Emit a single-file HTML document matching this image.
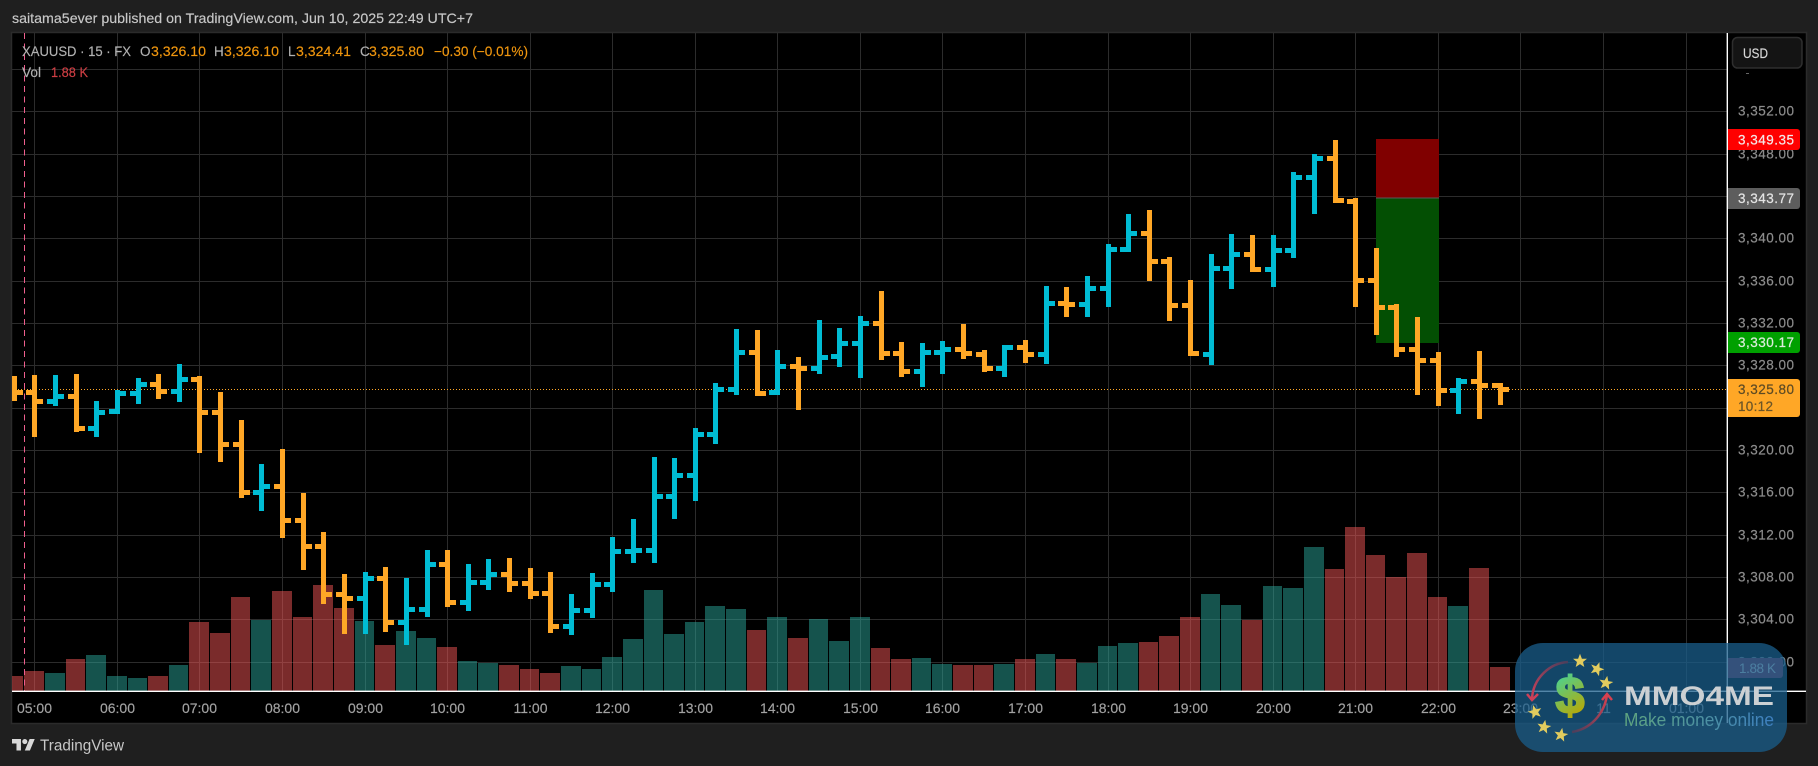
<!DOCTYPE html>
<html lang="en">
<head>
<meta charset="utf-8">
<title>XAUUSD chart</title>
<style>
html,body{margin:0;padding:0;background:#1f1f1f;width:1818px;height:766px;overflow:hidden}
svg{display:block}
text{font-family:"Liberation Sans",sans-serif}
.p{font-size:13.5px;fill:#8c8c8c;stroke:#8c8c8c;stroke-width:.2}
.t{font-size:14px;fill:#a3a3a3;stroke:#a3a3a3;stroke-width:.15;text-anchor:middle}
.g{stroke:#2c2c2c;stroke-width:1;fill:none}
.l{font-size:13.5px;stroke-width:.15}
.w{fill:#b2b2b2;stroke:#b2b2b2}
.o{fill:#f0960e;stroke:#f0960e}
</style>
</head>
<body>
<svg width="1818" height="766" viewBox="0 0 1818 766" xmlns="http://www.w3.org/2000/svg">
<defs>
<linearGradient id="dg" gradientUnits="userSpaceOnUse" x1="1558" y1="678" x2="1584" y2="714"><stop offset="0" stop-color="#4fd08c"/><stop offset="1" stop-color="#bda600"/></linearGradient>
<linearGradient id="mg" gradientUnits="userSpaceOnUse" x1="1624" y1="0" x2="1774" y2="0"><stop offset="0" stop-color="#5fa57f"/><stop offset="1" stop-color="#3d7fc0"/></linearGradient>
<linearGradient id="a1" gradientUnits="userSpaceOnUse" x1="1568" y1="662" x2="1532" y2="700"><stop offset="0" stop-color="#4a3f5c"/><stop offset="1" stop-color="#cf4058"/></linearGradient>
<linearGradient id="a2" gradientUnits="userSpaceOnUse" x1="1572" y1="732" x2="1607" y2="695"><stop offset="0" stop-color="#4a3f5c"/><stop offset="1" stop-color="#d8404f"/></linearGradient>
<polygon id="st" points="0,-7.2 1.9,-2.3 7,-2.2 3,1 4.3,6 0,3.1 -4.3,6 -3,1 -7,-2.2 -1.9,-2.3" fill="#e2cc5e"/>
</defs>

<rect x="0" y="0" width="1818" height="766" fill="#1f1f1f"/>
<text x="12" y="23" font-size="14" fill="#c8c8c8" stroke="#c8c8c8" stroke-width=".15" textLength="461" lengthAdjust="spacingAndGlyphs">saitama5ever published on TradingView.com, Jun 10, 2025 22:49 UTC+7</text>

<!-- chart frame -->
<rect x="11.5" y="32.5" width="1795" height="691" fill="#000" stroke="#2b2b2b" stroke-width="1.5"/>

<!-- grid -->
<path class="g" shape-rendering="crispEdges" d="M12 69.5H1727M12 111.5H1727M12 154.5H1727M12 196.5H1727M12 238.5H1727M12 281.5H1727M12 323.5H1727M12 365.5H1727M12 408.5H1727M12 450.5H1727M12 492.5H1727M12 535.5H1727M12 577.5H1727M12 619.5H1727M12 662.5H1727"/>
<path class="g" shape-rendering="crispEdges" d="M34.5 33V691M117.5 33V691M199.5 33V691M282.5 33V691M365.5 33V691M447.5 33V691M530.5 33V691M612.5 33V691M695.5 33V691M777.5 33V691M860.5 33V691M942.5 33V691M1025.5 33V691M1108.5 33V691M1190.5 33V691M1273.5 33V691M1355.5 33V691M1438.5 33V691M1520.5 33V691M1603.5 33V691M1686.5 33V691"/>

<!-- current price dotted line -->
<path d="M12 389.5H1727" stroke="#ffa726" stroke-width="1" stroke-dasharray="1 2" shape-rendering="crispEdges"/>

<!-- volume -->
<path fill="#f45656" fill-opacity=".5" shape-rendering="crispEdges" d="M12 676H23V691H12zM24 671H44V691H24zM66 659H85V691H66zM148 676H168V691H148zM189 622H209V691H189zM210 633H230V691H210zM231 597H250V691H231zM272 591H292V691H272zM293 617H312V691H293zM313 585H333V691H313zM334 608H354V691H334zM375 645H395V691H375zM437 647H457V691H437zM499 665H519V691H499zM520 669H539V691H520zM540 673H560V691H540zM747 630H766V691H747zM788 638H808V691H788zM871 648H890V691H871zM891 659H911V691H891zM953 665H973V691H953zM974 665H993V691H974zM1015 659H1035V691H1015zM1056 659H1076V691H1056zM1139 642H1158V691H1139zM1159 636H1179V691H1159zM1180 617H1200V691H1180zM1242 620H1262V691H1242zM1325 569H1344V691H1325zM1345 527H1365V691H1345zM1366 555H1385V691H1366zM1386 577H1406V691H1386zM1407 553H1427V691H1407zM1428 597H1447V691H1428zM1469 568H1489V691H1469zM1490 667H1510V691H1490z"/>
<path fill="#2aa69a" fill-opacity=".5" shape-rendering="crispEdges" d="M45 673H65V691H45zM86 655H106V691H86zM107 676H127V691H107zM128 678H147V691H128zM169 665H188V691H169zM251 620H271V691H251zM355 621H374V691H355zM396 631H416V691H396zM417 638H436V691H417zM458 661H477V691H458zM478 663H498V691H478zM561 666H581V691H561zM582 669H601V691H582zM602 657H622V691H602zM623 639H643V691H623zM644 590H663V691H644zM664 634H684V691H664zM685 622H704V691H685zM705 606H725V691H705zM726 609H746V691H726zM767 617H787V691H767zM809 619H828V691H809zM829 641H849V691H829zM850 617H870V691H850zM912 658H931V691H912zM932 664H952V691H932zM994 664H1014V691H994zM1036 654H1055V691H1036zM1077 663H1097V691H1077zM1098 646H1117V691H1098zM1118 643H1138V691H1118zM1201 594H1220V691H1201zM1221 605H1241V691H1221zM1263 586H1282V691H1263zM1283 588H1303V691H1283zM1304 547H1324V691H1304zM1448 606H1468V691H1448z"/>

<!-- session dashed line -->
<path d="M24.5 33V691" stroke="#ef5f8e" stroke-width="1" stroke-dasharray="6 4.6" shape-rendering="crispEdges"/>

<!-- position box -->
<rect x="1376" y="139" width="63" height="59" fill="#800000"/>
<rect x="1376" y="198" width="63" height="145" fill="#034f03"/>
<rect x="1376" y="197.5" width="63" height="1" fill="#5a5a5a"/>

<!-- OHLC bars -->
<path fill="none" stroke="#ffa726" stroke-width="5" shape-rendering="crispEdges" d="M14.5 376V401M14.5 392.5H23
M34.5 375V437M26 392.5H34.5M34.5 401.5H43
M76.5 374V432M68 396.5H76.5M76.5 428.5H85
M158.5 374V399M150 384.5H158.5M158.5 391.5H167
M199.5 376V453M191 379.5H199.5M199.5 412.5H208
M220.5 392V462M212 412.5H220.5M220.5 444.5H229
M241.5 420V498M233 444.5H241.5M241.5 492.5H250
M282.5 449V538M274 486.5H282.5M282.5 520.5H291
M303.5 493V570M295 520.5H303.5M303.5 546.5H312
M323.5 532V604M315 546.5H323.5M323.5 594.5H332
M344.5 574V634M336 594.5H344.5M344.5 598.5H353
M385.5 567V632M377 578.5H385.5M385.5 622.5H394
M447.5 550V607M439 564.5H447.5M447.5 602.5H456
M509.5 558V592M501 574.5H509.5M509.5 583.5H518
M530.5 568V599M522 583.5H530.5M530.5 593.5H539
M550.5 572V633M542 593.5H550.5M550.5 626.5H559
M757.5 330V396M749 352.5H757.5M757.5 393.5H766
M798.5 357V410M790 366.5H798.5M798.5 368.5H807
M881.5 291V360M873 323.5H881.5M881.5 353.5H890
M901.5 342V377M893 353.5H901.5M901.5 371.5H910
M963.5 324V359M955 349.5H963.5M963.5 353.5H972
M984.5 350V372M976 354.5H984.5M984.5 368.5H993
M1025.5 340V363M1017 347.5H1025.5M1025.5 354.5H1034
M1066.5 287V317M1058 303.5H1066.5M1066.5 304.5H1075
M1149.5 210V281M1141 233.5H1149.5M1149.5 261.5H1158
M1169.5 257V321M1161 261.5H1169.5M1169.5 305.5H1178
M1190.5 280V356M1182 305.5H1190.5M1190.5 353.5H1199
M1252.5 235V272M1244 254.5H1252.5M1252.5 269.5H1261
M1335.5 140V203M1327 158.5H1335.5M1335.5 200.5H1344
M1355.5 198V307M1347 201.5H1355.5M1355.5 280.5H1364
M1376.5 248V335M1368 280.5H1376.5M1376.5 307.5H1385
M1396.5 304V357M1388 307.5H1396.5M1396.5 349.5H1405
M1417.5 317V395M1409 349.5H1417.5M1417.5 360.5H1426
M1438.5 352V406M1430 360.5H1438.5M1438.5 390.5H1447
M1479.5 351V419M1471 381.5H1479.5M1479.5 385.5H1488
M1500.5 383V405M1492 385.5H1500.5M1500.5 389.5H1509"/>
<path fill="none" stroke="#00bcd4" stroke-width="5" shape-rendering="crispEdges" d="M55.5 375V406M47 401.5H55.5M55.5 396.5H64
M96.5 401V437M88 428.5H96.5M96.5 412.5H105
M117.5 390V414M109 411.5H117.5M117.5 393.5H126
M138.5 378V404M130 393.5H138.5M138.5 384.5H147
M179.5 364V402M171 391.5H179.5M179.5 379.5H188
M261.5 464V511M253 492.5H261.5M261.5 486.5H270
M365.5 572V634M357 598.5H365.5M365.5 578.5H374
M406.5 578V645M398 622.5H406.5M406.5 609.5H415
M427.5 550V617M419 609.5H427.5M427.5 564.5H436
M468.5 564V611M460 602.5H468.5M468.5 582.5H477
M488.5 559V590M480 582.5H488.5M488.5 574.5H497
M571.5 594V635M563 626.5H571.5M571.5 610.5H580
M592.5 573V618M584 610.5H592.5M592.5 584.5H601
M612.5 537V592M604 584.5H612.5M612.5 551.5H621
M633.5 519V563M625 551.5H633.5M633.5 550.5H642
M654.5 457V563M646 550.5H654.5M654.5 496.5H663
M674.5 458V519M666 496.5H674.5M674.5 475.5H683
M695.5 428V501M687 475.5H695.5M695.5 434.5H704
M715.5 383V444M707 434.5H715.5M715.5 389.5H724
M736.5 329V395M728 389.5H736.5M736.5 352.5H745
M777.5 350V395M769 392.5H777.5M777.5 366.5H786
M819.5 320V374M811 368.5H819.5M819.5 357.5H828
M839.5 328V367M831 356.5H839.5M839.5 343.5H848
M860.5 316V378M852 343.5H860.5M860.5 323.5H869
M922.5 343V387M914 371.5H922.5M922.5 352.5H931
M942.5 341V374M934 352.5H942.5M942.5 349.5H951
M1004.5 345V377M996 368.5H1004.5M1004.5 347.5H1013
M1046.5 286V364M1038 354.5H1046.5M1046.5 303.5H1055
M1087.5 276V317M1079 304.5H1087.5M1087.5 288.5H1096
M1108.5 244V307M1100 288.5H1108.5M1108.5 249.5H1117
M1128.5 214V252M1120 249.5H1128.5M1128.5 233.5H1137
M1211.5 254V365M1203 354.5H1211.5M1211.5 268.5H1220
M1231.5 234V289M1223 268.5H1231.5M1231.5 254.5H1240
M1273.5 235V287M1265 269.5H1273.5M1273.5 250.5H1282
M1293.5 172V258M1285 250.5H1293.5M1293.5 177.5H1302
M1314.5 154V214M1306 177.5H1314.5M1314.5 158.5H1323
M1458.5 378V414M1450 390.5H1458.5M1458.5 381.5H1467"/>

<!-- legend -->
<text class="l w" x="22" y="56" textLength="109" lengthAdjust="spacingAndGlyphs">XAUUSD · 15 · FX</text>
<text class="l w" x="140" y="56">O</text>
<text class="l o" x="151" y="56" textLength="55" lengthAdjust="spacingAndGlyphs">3,326.10</text>
<text class="l w" x="214" y="56">H</text>
<text class="l o" x="224" y="56" textLength="55" lengthAdjust="spacingAndGlyphs">3,326.10</text>
<text class="l w" x="288" y="56">L</text>
<text class="l o" x="296" y="56" textLength="55" lengthAdjust="spacingAndGlyphs">3,324.41</text>
<text class="l w" x="360" y="56">C</text>
<text class="l o" x="369" y="56" textLength="55" lengthAdjust="spacingAndGlyphs">3,325.80</text>
<text class="l o" x="434" y="56" textLength="94" lengthAdjust="spacingAndGlyphs">−0.30 (−0.01%)</text>
<text class="l w" x="22" y="77" textLength="19" lengthAdjust="spacingAndGlyphs">Vol</text>
<text x="51" y="77" font-size="13.5" fill="#d03f44" stroke="#d03f44" stroke-width=".15" textLength="37" lengthAdjust="spacingAndGlyphs">1.88 K</text>

<!-- axes lines -->
<rect x="12" y="690.6" width="1794" height="1.4" fill="#fff"/>
<rect x="1726.6" y="33" width="1.4" height="690" fill="#fff"/>

<!-- price axis -->
<rect x="1732.5" y="37.5" width="69.5" height="30.5" rx="5" fill="#141414" stroke="#2e2e2e" stroke-width="1.5"/>
<text x="1743" y="58" font-size="13.5" fill="#d8d8d8" stroke="#d8d8d8" stroke-width=".15" textLength="25" lengthAdjust="spacingAndGlyphs">USD</text>
<rect x="1746" y="73" width="3" height="1" fill="#666"/>
<g class="pl">
<text class="p" x="1738" y="115.5" textLength="56" lengthAdjust="spacing">3,352.00</text>
<text class="p" x="1738" y="158.5" textLength="56" lengthAdjust="spacing">3,348.00</text>
<text class="p" x="1738" y="242.5" textLength="56" lengthAdjust="spacing">3,340.00</text>
<text class="p" x="1738" y="285.5" textLength="56" lengthAdjust="spacing">3,336.00</text>
<text class="p" x="1738" y="327.5" textLength="56" lengthAdjust="spacing">3,332.00</text>
<text class="p" x="1738" y="369.5" textLength="56" lengthAdjust="spacing">3,328.00</text>
<text class="p" x="1738" y="454.5" textLength="56" lengthAdjust="spacing">3,320.00</text>
<text class="p" x="1738" y="496.5" textLength="56" lengthAdjust="spacing">3,316.00</text>
<text class="p" x="1738" y="539.5" textLength="56" lengthAdjust="spacing">3,312.00</text>
<text class="p" x="1738" y="581.5" textLength="56" lengthAdjust="spacing">3,308.00</text>
<text class="p" x="1738" y="623.5" textLength="56" lengthAdjust="spacing">3,304.00</text>
<text class="p" x="1738" y="666.5" textLength="56" lengthAdjust="spacing">3,300.00</text>
</g>

<path d="M1728 129H1797a3 3 0 0 1 3 3V147a3 3 0 0 1-3 3H1728z" fill="#ff0000"/>
<text x="1738" y="144.5" font-size="13.5" fill="#f4e8e8" stroke="#f4e8e8" stroke-width=".2" textLength="56" lengthAdjust="spacing">3,349.35</text>
<path d="M1728 188H1797a3 3 0 0 1 3 3V206a3 3 0 0 1-3 3H1728z" fill="#5d5d5d"/>
<text x="1738" y="203" font-size="13.5" fill="#e4e4e4" stroke="#e4e4e4" stroke-width=".2" textLength="56" lengthAdjust="spacing">3,343.77</text>
<path d="M1728 332H1797a3 3 0 0 1 3 3V350a3 3 0 0 1-3 3H1728z" fill="#00a000"/>
<text x="1738" y="347" font-size="13.5" fill="#dcecdc" stroke="#dcecdc" stroke-width=".2" textLength="56" lengthAdjust="spacing">3,330.17</text>
<path d="M1728 379H1797a3 3 0 0 1 3 3V414a3 3 0 0 1-3 3H1728z" fill="#ffa726"/>
<text x="1738" y="394" font-size="13.5" fill="#5c4a24" stroke="#5c4a24" stroke-width=".2" textLength="56" lengthAdjust="spacing">3,325.80</text>
<text x="1738" y="411" font-size="13.5" fill="#6b5528" stroke="#6b5528" stroke-width=".2" textLength="35" lengthAdjust="spacing">10:12</text>

<path d="M1728 658H1780a3 3 0 0 1 3 3V675a3 3 0 0 1-3 3H1728z" fill="#842c4c"/>
<text x="1739" y="673" font-size="13.5" fill="#e0e0e0" textLength="37" lengthAdjust="spacing">1.88 K</text>

<!-- time axis -->
<text class="t" x="34.5" y="713">05:00</text>
<text class="t" x="117.5" y="713">06:00</text>
<text class="t" x="199.5" y="713">07:00</text>
<text class="t" x="282.5" y="713">08:00</text>
<text class="t" x="365.5" y="713">09:00</text>
<text class="t" x="447.5" y="713">10:00</text>
<text class="t" x="530.5" y="713">11:00</text>
<text class="t" x="612.5" y="713">12:00</text>
<text class="t" x="695.5" y="713">13:00</text>
<text class="t" x="777.5" y="713">14:00</text>
<text class="t" x="860.5" y="713">15:00</text>
<text class="t" x="942.5" y="713">16:00</text>
<text class="t" x="1025.5" y="713">17:00</text>
<text class="t" x="1108.5" y="713">18:00</text>
<text class="t" x="1190.5" y="713">19:00</text>
<text class="t" x="1273.5" y="713">20:00</text>
<text class="t" x="1355.5" y="713">21:00</text>
<text class="t" x="1438.5" y="713">22:00</text>
<text class="t" x="1520.5" y="713">23:00</text>
<text class="t" x="1603.5" y="713">11</text>
<text class="t" x="1686.5" y="713">01:00</text>

<!-- footer logo -->
<g transform="translate(12 736.4) scale(.64)" fill="#d8d8d8">
<path d="M14 22H7V11H0V4h14v18zM28 22h-8l7.5-18h8L28 22z"/>
<circle cx="20" cy="8" r="4"/>
</g>
<text x="40" y="750.5" font-size="15.5" fill="#c8c8c8" textLength="84" lengthAdjust="spacingAndGlyphs">TradingView</text>

<!-- watermark -->
<rect x="1515" y="643" width="272" height="109" rx="28" fill="rgb(26,93,139)" fill-opacity=".75"/>
<path d="M1568 662C1550 663 1533 678 1532 699" fill="none" stroke="url(#a1)" stroke-width="2.5"/>
<path d="M1527 694L1532 700L1538 694" fill="none" stroke="#cf4058" stroke-width="2.5"/>
<path d="M1572 732C1590 729 1604 715 1607 695" fill="none" stroke="url(#a2)" stroke-width="2.5"/>
<path d="M1602 700L1607 694L1612 700" fill="none" stroke="#d8404f" stroke-width="2.5"/>
<use href="#st" x="1580" y="661"/>
<use href="#st" transform="translate(1597 669) rotate(20)"/>
<use href="#st" transform="translate(1606 683) rotate(10)"/>
<use href="#st" transform="translate(1535 712) rotate(-15)"/>
<use href="#st" transform="translate(1544 727) rotate(10)"/>
<use href="#st" transform="translate(1561 735) rotate(10)"/>
<text x="1570" y="713" font-size="52" font-weight="bold" text-anchor="middle" fill="url(#dg)" stroke="url(#dg)" stroke-width="2">$</text>
<text x="1624" y="705" font-size="27" font-weight="bold" fill="#ccd0d3" textLength="150" lengthAdjust="spacingAndGlyphs">MMO4ME</text>
<text x="1624" y="726" font-size="18" fill="url(#mg)" textLength="150" lengthAdjust="spacingAndGlyphs">Make money online</text>
</svg>
</body>
</html>
